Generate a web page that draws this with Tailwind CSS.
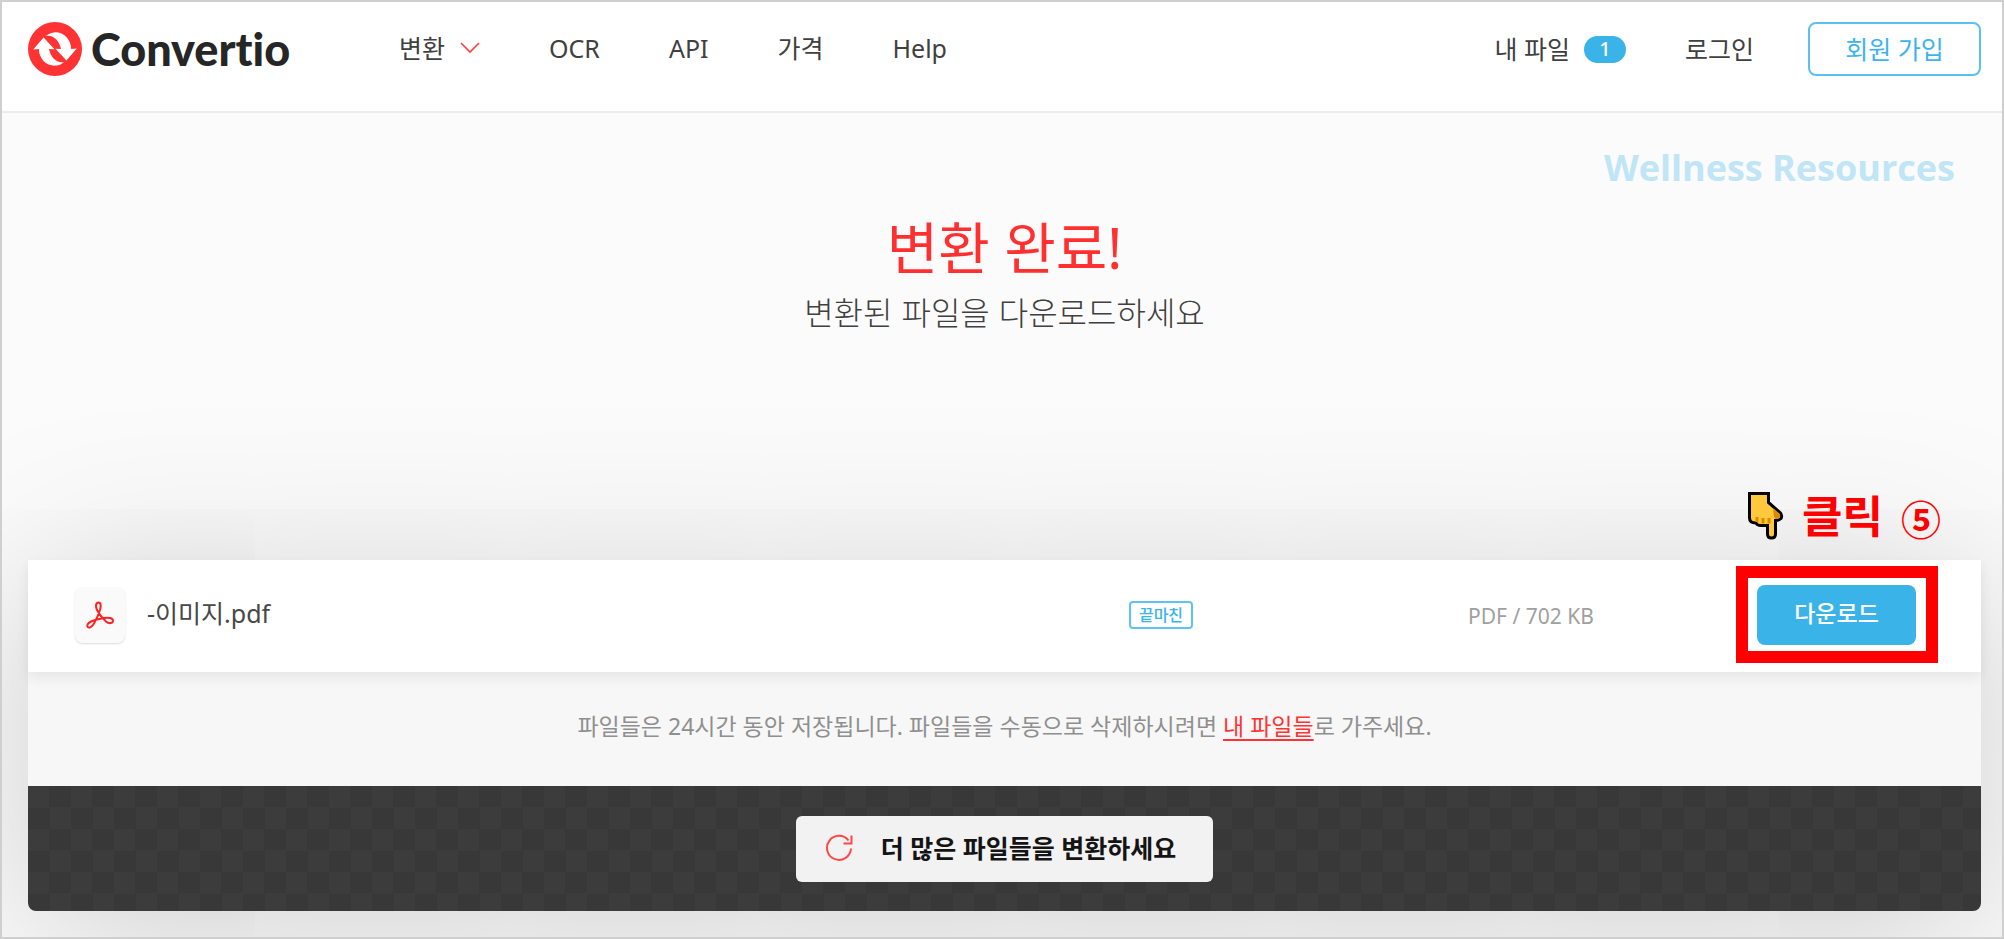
<!DOCTYPE html>
<html lang="ko">
<head>
<meta charset="utf-8">
<meta name="viewport" content="width=device-width, initial-scale=1">
<title>Convertio</title>
<script src="https://cdn.jsdelivr.net/npm/@tailwindcss/browser@4"></script>
</head>
<body class="flex min-h-screen flex-col overflow-x-hidden border-2 border-[#cfcfcf] bg-[#fbfbfb] font-['Noto_Sans','Noto_Sans_CJK_KR',sans-serif] text-[#404040]">
  <header class="flex items-center border-b-2 border-[#ececec] bg-white pt-5 pr-[21px] pb-[35px] pl-[26px]">
    <a href="#" class="flex w-[371px] shrink-0 items-center gap-[9px]" aria-label="Convertio">
      <svg class="size-[54px] shrink-0" viewBox="0 0 54 54" aria-hidden="true">
        <circle cx="27" cy="27" r="27" fill="#ff3333"/>
        <g fill="#fff">
          <path d="M15.6 15.4 L5.2 27.6 L10.8 27 C11 37 19 44.5 28 43.6 C31.500 43.300 34 42 36 40 C29 41.500 22.500 35.500 21 27 L26.500 27.300 Z"/>
          <path transform="rotate(180 27 27)" d="M15.6 15.4 L5.2 27.6 L10.8 27 C11 37 19 44.5 28 43.6 C31.500 43.300 34 42 36 40 C29 41.500 22.500 35.500 21 27 L26.500 27.300 Z"/>
        </g>
      </svg>
      <span class="font-['Lato',sans-serif] text-[45px] leading-[54px] font-black text-[#262626] [font-variant-ligatures:none]">Convertio</span>
    </a>
    <nav class="flex flex-1 items-center gap-[69px] pb-[2px] text-[25px] leading-[36px]">
      <a href="#" class="flex items-center gap-[15px]">변환
        <svg class="h-[12px] w-[20px]" viewBox="0 0 20 12" fill="none" stroke="#ff3f3f" stroke-width="1.600" aria-hidden="true"><path d="M1 1 L10 10 L19 1"/></svg>
      </a>
      <a href="#">OCR</a>
      <a href="#">API</a>
      <a href="#">가격</a>
      <a href="#">Help</a>
    </nav>
    <div class="flex shrink-0 items-center text-[25px] leading-[36px]">
      <a href="#" class="flex items-center gap-[14px]">내 파일 <span class="flex h-[27px] w-[42px] items-center justify-center rounded-full bg-[#3ab3e9] text-[20px] font-medium text-white">1</span></a>
      <a href="#" class="ml-[59px]">로그인</a>
      <a href="#" class="ml-[54px] flex h-[54px] w-[173px] items-center justify-center rounded-lg border-2 border-[#5ac0ed] text-[#3cb4eb]">회원 가입</a>
    </div>
  </header>

  <main class="relative flex-1 pt-[102px] pr-[21px] pb-[26px] pl-[26px]">
    <p class="absolute top-[30px] right-[47px] font-['Open_Sans',sans-serif] text-[36px] leading-[50px] font-bold text-[#bfe5f6]">Wellness Resources</p>
    <h1 class="text-center text-[56px] leading-[64px] text-[#ff3030]">변환 완료!</h1>
    <p class="mt-3 text-center font-['Noto_Sans_CJK_KR',sans-serif] text-[32px] leading-[40px] font-light">변환된 파일을 다운로드하세요</p>

    <section class="mt-[229px] rounded-b-lg bg-[#f7f7f7] shadow-[0_20px_180px_rgba(0,0,0,0.19)]">
      <div class="relative flex h-[112px] items-center bg-white pr-[65px] pb-[3px] pl-[47px] shadow-[0_6px_12px_rgba(0,0,0,0.07)]">
        <div class="flex min-w-0 flex-1 items-center gap-[22px]">
          <span class="flex h-[56px] w-[50px] items-center justify-center rounded-lg bg-[#fafafa] shadow-[0_1px_2px_rgba(0,0,0,0.14)]">
            <svg class="size-[28px]" viewBox="0 0 28 28" fill="none" stroke="#ff2222" stroke-width="2" aria-hidden="true">
              <path d="M12.500 1.500 C9.500 1.500 9.500 6 11 9 C12.500 12 16 17 20 20.500 C23 23 27 22.500 27 19.800 C27 17 22.500 16.300 18 17 C13.500 17.600 8.500 18.800 5 20.500 C1.500 22.300 .8 24.500 1.700 25.800 C3 27.500 6 26 8 22.500 C10.500 18 12.500 13.500 14 9 C15 5.500 15.200 1.500 12.500 1.500 Z"/>
            </svg>
          </span>
          <span class="pb-1 text-[25px] leading-[36px] text-[#484848]">-이미지.pdf</span>
        </div>
        <div class="w-[339px]"><span class="flex h-[28px] w-[64px] items-center justify-center rounded border-2 border-[#5fc3ee] text-[16px] leading-[24px] font-medium text-[#3cb4eb]">끝마친</span></div>
        <div class="w-[289px] pt-[2px] text-[21px] leading-[30px] text-[#a0a0a0]">PDF / 702 KB</div>
        <button type="button" class="h-[60px] w-[159px] rounded-lg bg-[#3ab3e9] pb-1 text-[23px] leading-[32px] font-medium text-white">다운로드</button>
        <div class="pointer-events-none absolute top-[6px] right-[43px] h-[97px] w-[202px] border-[12px] border-[#ff0000]"></div>
        <div class="absolute right-[40px] bottom-[112px] flex items-center gap-[18px] pb-[14px] text-[#ff0000]">
          <svg class="h-[48px] w-[36px]" viewBox="0 0 36 48" aria-hidden="true">
            <path d="M1.500 1.500 H20.500 V10.500 L32.500 21 Q34.500 24 33 26.500 Q31 28.500 27.500 28.500 V42 Q27.500 46 23.500 46 Q19.500 46 19.500 42 V33.500 H13 Q9 33.500 8 31 Q1.500 31 1.500 26 Z" fill="#ffc83d" stroke="#000" stroke-width="3"/>
            <path d="M25.500 16.500 L32 22 Q33 26.500 27.500 27 Q25 25 25.500 16.500 Z" fill="#d98c00"/>
            <path d="M9 25 V30 M15 26 V31.500 M21 26 V31.500" stroke="#d98c00" stroke-width="3"/>
          </svg>
          <span class="text-[44px] leading-[52px] font-bold">클릭</span>
          <span class="pt-2 text-[40px] leading-[52px] font-bold">⑤</span>
        </div>
      </div>
      <p class="flex h-[114px] items-center justify-center pb-[7px] text-[23px] leading-[32px] text-[#8f8f8f]"><span>파일들은 24시간 동안 저장됩니다. 파일들을 수동으로 삭제하시려면 <a href="#" class="text-[#ff3333] underline underline-offset-4">내 파일들</a>로 가주세요.</span></p>
      <div class="flex h-[125px] items-center justify-center rounded-b-lg bg-[#383838] bg-[conic-gradient(#383838_25%,#3c3c3c_0_50%,#383838_0_75%,#3c3c3c_0)] bg-size-[43px_43px]">
        <button type="button" class="flex h-[66px] items-center gap-[28px] rounded-md bg-[#f2f2f2] pr-[37px] pb-[2px] pl-[29px] text-[25px] leading-[36px] font-bold text-[#141414]">
          <svg class="size-[28px]" viewBox="0 0 28 28" fill="none" stroke="#ff4747" stroke-width="2" aria-hidden="true"><path d="M26 14.500 A12 12 0 1 1 23.500 6.500 M26.500 1.500 V9.500 H18.500"/></svg>
          더 많은 파일들을 변환하세요
        </button>
      </div>
    </section>
  </main>
</body>
</html>
